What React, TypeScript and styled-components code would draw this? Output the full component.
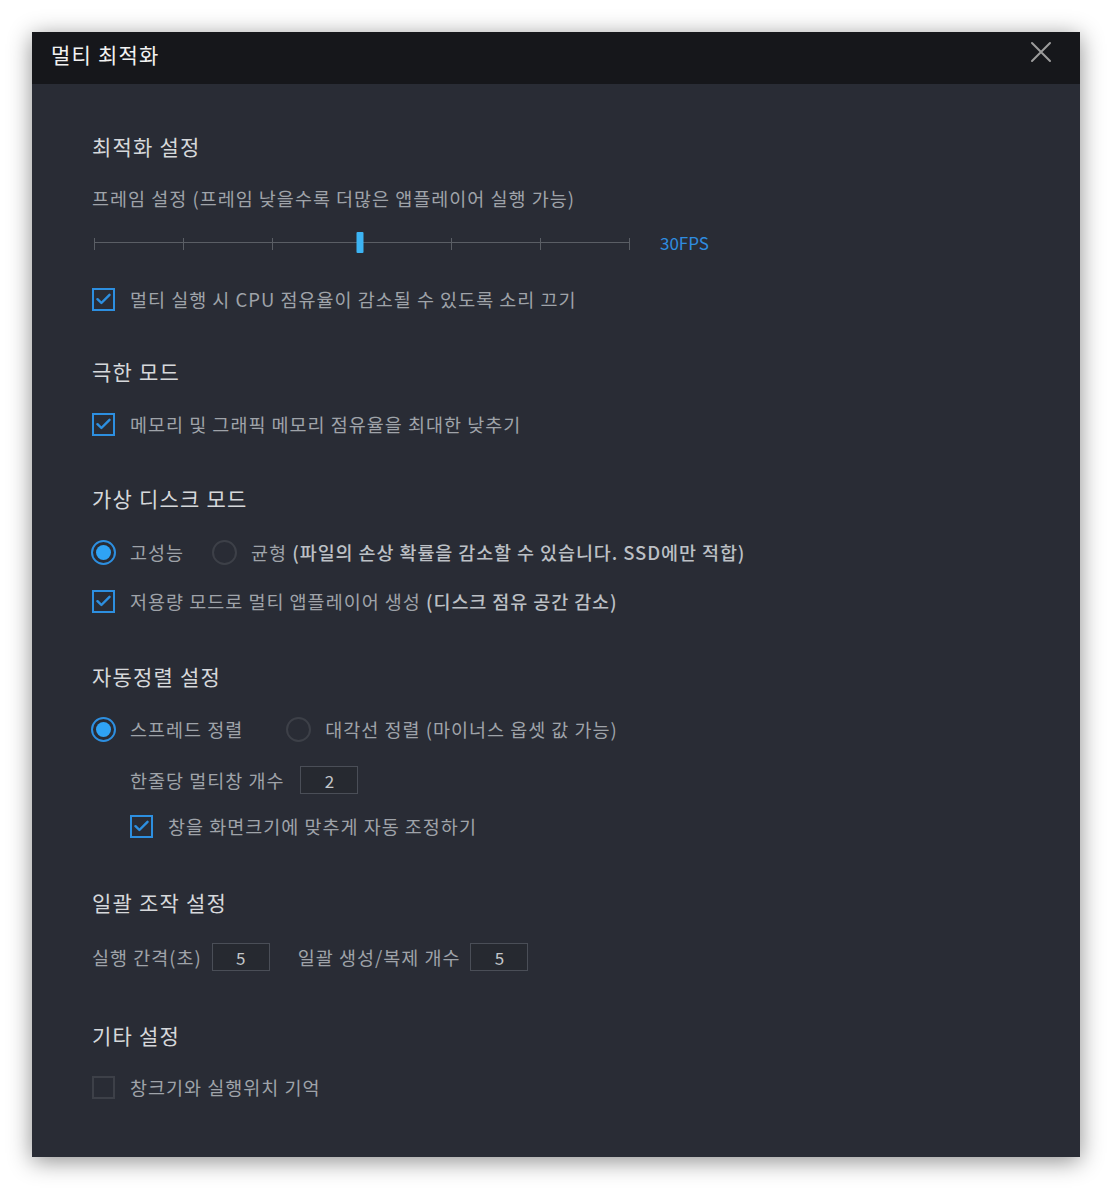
import React from "react";
import styled, { createGlobalStyle } from "styled-components";

const Global = createGlobalStyle`
  html, body { margin: 0; padding: 0; background: #ffffff; }
  body { font-family: "Noto Sans CJK KR", "Noto Sans", sans-serif; }
  * { box-sizing: border-box; }
`;

const Page = styled.div`
  padding: 32px;
  width: 1112px;
  height: 1189px;
`;

const Dialog = styled.div`
  width: 1048px;
  height: 1125px;
  background: #292c35;
  box-shadow: 0 4px 22px rgba(0, 0, 0, 0.45);
  display: flex;
  flex-direction: column;
`;

const TitleBar = styled.div`
  height: 52px;
  background: #16171b;
  display: flex;
  align-items: center;
  justify-content: space-between;
  padding: 0 27px 0 19px;
  flex-shrink: 0;
`;

const Title = styled.div`
  color: #f2f2f2;
  font-size: 21px;
  letter-spacing: 1.2px;
  line-height: 28px;
  margin-top: -9px;
`;

const CloseButton = styled.button`
  border: none;
  background: transparent;
  padding: 0;
  width: 24px;
  height: 24px;
  display: flex;
  align-items: center;
  justify-content: center;
  cursor: pointer;
  margin-top: -12px;
`;

const Body = styled.div`
  padding: 48px 60px 0 60px;
  display: flex;
  flex-direction: column;
`;

const Section = styled.section<{ $mt?: number }>`
  display: flex;
  flex-direction: column;
  margin-top: ${(p) => p.$mt ?? 0}px;
`;

const Heading = styled.h2`
  margin: 0;
  font-size: 21px;
  letter-spacing: 1.2px;
  line-height: 28px;
  font-weight: 400;
  color: #d6d8db;
`;

const Row = styled.div<{ $mt: number; $indent?: number; $h?: number }>`
  display: flex;
  align-items: center;
  height: ${(p) => p.$h ?? 26}px;
  margin-top: ${(p) => p.$mt}px;
  margin-left: ${(p) => p.$indent ?? 0}px;
`;

const Label = styled.span`
  font-size: 18.5px;
  letter-spacing: 1px;
  line-height: 26px;
  color: #9fa3a9;
  white-space: nowrap;
`;

const Strong = styled.span`
  color: #bcc0c5;
  font-weight: 500;
  letter-spacing: 0.9px;
`;

const CheckBox = styled.span<{ $checked: boolean }>`
  width: 23px;
  height: 23px;
  border: 2px solid ${(p) => (p.$checked ? "#2d8fe0" : "#3d4048")};
  display: inline-flex;
  align-items: center;
  justify-content: center;
  margin-right: 15px;
  flex-shrink: 0;
`;

const RadioOuter = styled.span<{ $checked: boolean }>`
  width: 25px;
  height: 25px;
  border-radius: 50%;
  border: 2px solid ${(p) => (p.$checked ? "#2d8fe0" : "#3d4048")};
  display: inline-flex;
  align-items: center;
  justify-content: center;
  margin-right: 14px;
  flex-shrink: 0;
`;

const RadioDot = styled.span`
  width: 15px;
  height: 15px;
  border-radius: 50%;
  background: #2fa3f5;
`;

const RadioItem = styled.label<{ $gap?: number }>`
  display: inline-flex;
  align-items: center;
  margin-right: ${(p) => p.$gap ?? 0}px;
  margin-left: -1px;
`;

const SliderWrap = styled.div`
  position: relative;
  width: 536px;
  height: 26px;
  margin-left: 2px;
  display: flex;
  align-items: center;
`;

const Track = styled.div`
  position: absolute;
  left: 0;
  right: 0;
  top: 12px;
  height: 1px;
  background: #5a5e65;
`;

const Ticks = styled.div`
  position: relative;
  width: 100%;
  display: flex;
  justify-content: space-between;
`;

const Tick = styled.span`
  width: 1px;
  height: 12px;
  margin-top: 1px;
  background: #5a5e65;
`;

const Thumb = styled.span`
  position: absolute;
  top: 2px;
  width: 7px;
  height: 21px;
  background: #3cb4f4;
  border-radius: 1px;
  transform: translateX(-50%);
`;

const SliderValue = styled.span`
  margin-left: 30px;
  font-size: 17px;
  color: #2f8de0;
  line-height: 26px;
`;

const NumberBox = styled.span<{ $ml: number; $mr?: number }>`
  width: 58px;
  height: 28px;
  border: 1px solid #4a4e57;
  background: #262930;
  color: #c3c6ca;
  font-size: 17px;
  line-height: 26px;
  text-align: center;
  margin-left: ${(p) => p.$ml}px;
  margin-right: ${(p) => p.$mr ?? 0}px;
  padding-top: 1px;
  flex-shrink: 0;
`;

const Check = () => (
  <svg width="15" height="12" viewBox="0 0 15 12" fill="none">
    <path d="M1.5 6.2 L5.4 10 L13.5 1.8" stroke="#2d8fe0" strokeWidth="2.4" strokeLinecap="round" strokeLinejoin="round" />
  </svg>
);

const CheckRow: React.FC<{ checked: boolean; mt: number; indent?: number; children: React.ReactNode }> = ({ checked, mt, indent, children }) => (
  <Row $mt={mt} $indent={indent}>
    <CheckBox $checked={checked}>{checked && <Check />}</CheckBox>
    <Label>{children}</Label>
  </Row>
);

const Radio: React.FC<{ checked: boolean; gap?: number; children: React.ReactNode }> = ({ checked, gap, children }) => (
  <RadioItem $gap={gap}>
    <RadioOuter $checked={checked}>{checked && <RadioDot />}</RadioOuter>
    <Label>{children}</Label>
  </RadioItem>
);

const Slider: React.FC<{ ratio: number }> = ({ ratio }) => (
  <SliderWrap>
    <Track />
    <Ticks>
      {Array.from({ length: 7 }).map((_, i) => (
        <Tick key={i} />
      ))}
    </Ticks>
    <Thumb style={{ left: `${ratio * 100}%` }} />
  </SliderWrap>
);

export default function App() {
  return (
    <>
      <Global />
      <Page>
        <Dialog>
          <TitleBar>
            <Title>멀티 최적화</Title>
            <CloseButton aria-label="닫기">
              <svg width="22" height="22" viewBox="0 0 22 22">
                <path d="M2 2 L20 20 M20 2 L2 20" stroke="#9c9c9c" strokeWidth="2" strokeLinecap="round" />
              </svg>
            </CloseButton>
          </TitleBar>
          <Body>
            <Section>
              <Heading>최적화 설정</Heading>
              <Row $mt={25}>
                <Label>프레임 설정 (프레임 낮을수록 더많은 앱플레이어 실행 가능)</Label>
              </Row>
              <Row $mt={19}>
                <Slider ratio={0.496} />
                <SliderValue>30FPS</SliderValue>
              </Row>
              <CheckRow checked mt={30}>멀티 실행 시 CPU 점유율이 감소될 수 있도록 소리 끄기</CheckRow>
            </Section>

            <Section $mt={45}>
              <Heading>극한 모드</Heading>
              <CheckRow checked mt={26}>메모리 및 그래픽 메모리 점유율을 최대한 낮추기</CheckRow>
            </Section>

            <Section $mt={47}>
              <Heading>가상 디스크 모드</Heading>
              <Row $mt={27}>
                <Radio checked gap={29}>고성능</Radio>
                <Radio checked={false}>
                  균형 <Strong>(파일의 손상 확률을 감소할 수 있습니다. SSD에만 적합)</Strong>
                </Radio>
              </Row>
              <CheckRow checked mt={23}>
                저용량 모드로 멀티 앱플레이어 생성 <Strong>(디스크 점유 공간 감소)</Strong>
              </CheckRow>
            </Section>

            <Section $mt={48}>
              <Heading>자동정렬 설정</Heading>
              <Row $mt={26}>
                <Radio checked gap={44}>스프레드 정렬</Radio>
                <Radio checked={false}>대각선 정렬 (마이너스 옵셋 값 가능)</Radio>
              </Row>
              <Row $mt={24} $indent={38} $h={28}>
                <Label>한줄당 멀티창 개수</Label>
                <NumberBox $ml={16}>2</NumberBox>
              </Row>
              <CheckRow checked mt={19} indent={38}>창을 화면크기에 맞추게 자동 조정하기</CheckRow>
            </Section>

            <Section $mt={49}>
              <Heading>일괄 조작 설정</Heading>
              <Row $mt={27} $h={28}>
                <Label>실행 간격(초)</Label>
                <NumberBox $ml={10} $mr={28}>5</NumberBox>
                <Label>일괄 생성/복제 개수</Label>
                <NumberBox $ml={10}>5</NumberBox>
              </Row>
            </Section>

            <Section $mt={50}>
              <Heading>기타 설정</Heading>
              <CheckRow checked={false} mt={25}>창크기와 실행위치 기억</CheckRow>
            </Section>
          </Body>
        </Dialog>
      </Page>
    </>
  );
}
